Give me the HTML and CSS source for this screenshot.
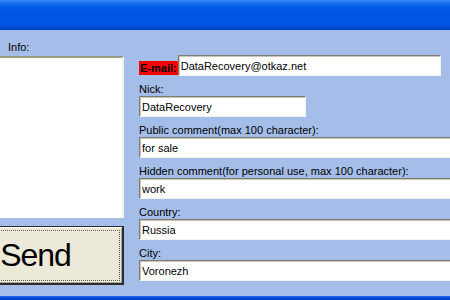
FILE: index.html
```html
<!DOCTYPE html>
<html lang="en">
<head>
  <meta charset="UTF-8">
  <title>Registration</title>
  <link rel="stylesheet" href="styles.css">
</head>
<body>

  <div class="titlebar"></div>

  <div class="dialog">
    <div class="left">
      <div class="info-label">Info:</div>
      <textarea class="info"></textarea>
      <button class="send" type="button">Send</button>
    </div>

    <form class="fields">
      <div class="email-row">
        <label class="email-label" for="email">E-mail:</label>
        <input class="field wide" type="text" id="email" value="DataRecovery@otkaz.net">
      </div>

      <label for="nick">Nick:</label>
      <input class="field short" type="text" id="nick" value="DataRecovery">

      <label for="public">Public comment(max 100 character):</label>
      <input class="field full" type="text" id="public" value="for sale">

      <label for="hidden">Hidden comment(for personal use, max 100 character):</label>
      <input class="field full" type="text" id="hidden" value="work">

      <label for="country">Country:</label>
      <input class="field full" type="text" id="country" value="Russia">

      <label for="city">City:</label>
      <input class="field full" type="text" id="city" value="Voronezh">
    </form>
  </div>

  <div class="bottombar"></div>

</body>
</html>
```

FILE: styles.css
```css
body {
  margin: 0;
  width: 450px;
  height: 300px;
  overflow: hidden;
  background-color: #a5bee9;
  font-family: "Liberation Sans", Arial, sans-serif;
  font-size: 11px;
  color: #000;
}
.titlebar {
  height: 30px;
  box-sizing: border-box;
  background: linear-gradient(#3d8ef7 0, #1a6ff0 3px, #0058e6 8px, #0055e3 24px, #004fd8 27px, #003fb8 30px);
}
.dialog {
  display: flex;
  height: 266px;
  gap: 15px;
}
.left {
  flex: none;
  margin-left: -52px;
  width: 176px;
  display: flex;
  flex-direction: column;
}
.info-label {
  padding: 11px 0 0 60px;
  height: 15px;
}
.info {
  height: 162px;
  margin: 0;
  padding: 0;
  box-sizing: border-box;
  background: #fff;
  border: 1px solid #fff;
  border-top: 2px solid #9d9a86;
  border-right: 2px solid #f2f1ea;
  resize: none;
}
.send {
  margin-top: 8px;
  height: 59px;
  background-color: #ece9d8;
  border: 1px solid #2c2c2c;
  border-right-width: 2px;
  border-bottom-width: 2px;
  box-shadow: inset 1px 1px 0 #fff, inset -1px -1px 0 #aca899;
  outline: 1px dotted #555;
  outline-offset: -5px;
  font-family: "Liberation Sans", Arial, sans-serif;
  font-size: 32px;
  letter-spacing: -1px;
  padding: 0;
  color: #000;
}
.fields {
  flex: 1;
  display: flex;
  flex-direction: column;
  align-items: flex-start;
  padding-top: 25px;
}
.email-row {
  display: flex;
  align-items: flex-start;
}
.email-label {
  background-color: #ff0000;
  font-weight: bold;
  padding: 0 1px;
  margin-top: 6px;
  line-height: 11px;
}
.fields label {
  line-height: 14px;
}
.field {
  height: 21px;
  margin: 0 0 6px 0;
  padding: 0 2px;
  box-sizing: border-box;
  font-family: "Liberation Sans", Arial, sans-serif;
  font-size: 11px;
  background: #fff;
  border: 1px solid;
  border-color: #7f7d72 #f4f3ee #f4f3ee #7f7d72;
  box-shadow: inset 1px 1px 0 #c9c6b8;
}
.wide {
  width: 263px;
}
.short {
  width: 167px;
}
.full {
  width: 330px;
}
.bottombar {
  height: 4px;
  background: linear-gradient(#2b6ff0 0, #0047d4 2px, #0040c8 4px);
}
```
